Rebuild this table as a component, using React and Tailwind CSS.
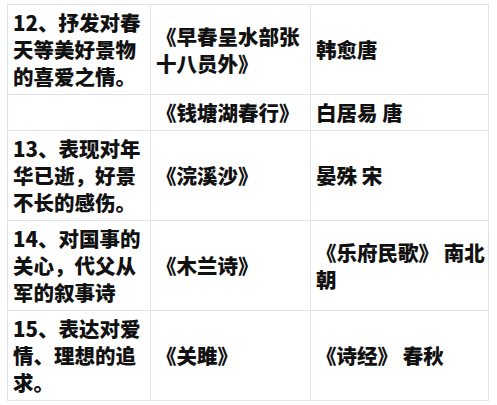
import React from "react";

const rows = [
  {
    h: "h-[90px]",
    a: ["12、抒发对春", "天等美好景物", "的喜爱之情。"],
    b: ["《早春呈水部张", "十八员外》"],
    c: ["韩愈唐"],
  },
  { h: "h-[36px]", a: [], b: ["《钱塘湖春行》"], c: ["白居易 唐"] },
  {
    h: "h-[90px]",
    a: ["13、表现对年", "华已逝，好景", "不长的感伤。"],
    b: ["《浣溪沙》"],
    c: ["晏殊 宋"],
  },
  {
    h: "h-[90px]",
    a: ["14、对国事的", "关心，代父从", "军的叙事诗"],
    b: ["《木兰诗》"],
    c: ["《乐府民歌》 南北", "朝"],
  },
  {
    h: "h-[90px]",
    a: ["15、表达对爱", "情、理想的追", "求。"],
    b: ["《关雎》"],
    c: ["《诗经》 春秋"],
  },
];

function Cell({ lines, h }) {
  return (
    <div
      className={`${h} flex items-center px-[5px] border-r border-b border-[#dde4eb] overflow-hidden`}
    >
      <div className="whitespace-pre">
        {lines.map((l, i) => (
          <div key={i}>{l}</div>
        ))}
      </div>
    </div>
  );
}

export default function App() {
  return (
    <div className="w-[497px] h-[405px] bg-white pt-[4px] pl-[7px] overflow-hidden">
      <div
        className="grid grid-cols-[143px_160px_178px] border-l border-t border-[#dde4eb] w-[482px] text-[20.5px] leading-[27px] font-black text-[#111]"
        style={{ fontFamily: '"Noto Sans CJK SC", "Noto Sans", sans-serif' }}
      >
        {rows.map((r, i) => (
          <React.Fragment key={i}>
            <Cell lines={r.a} h={r.h} />
            <Cell lines={r.b} h={r.h} />
            <Cell lines={r.c} h={r.h} />
          </React.Fragment>
        ))}
      </div>
    </div>
  );
}
